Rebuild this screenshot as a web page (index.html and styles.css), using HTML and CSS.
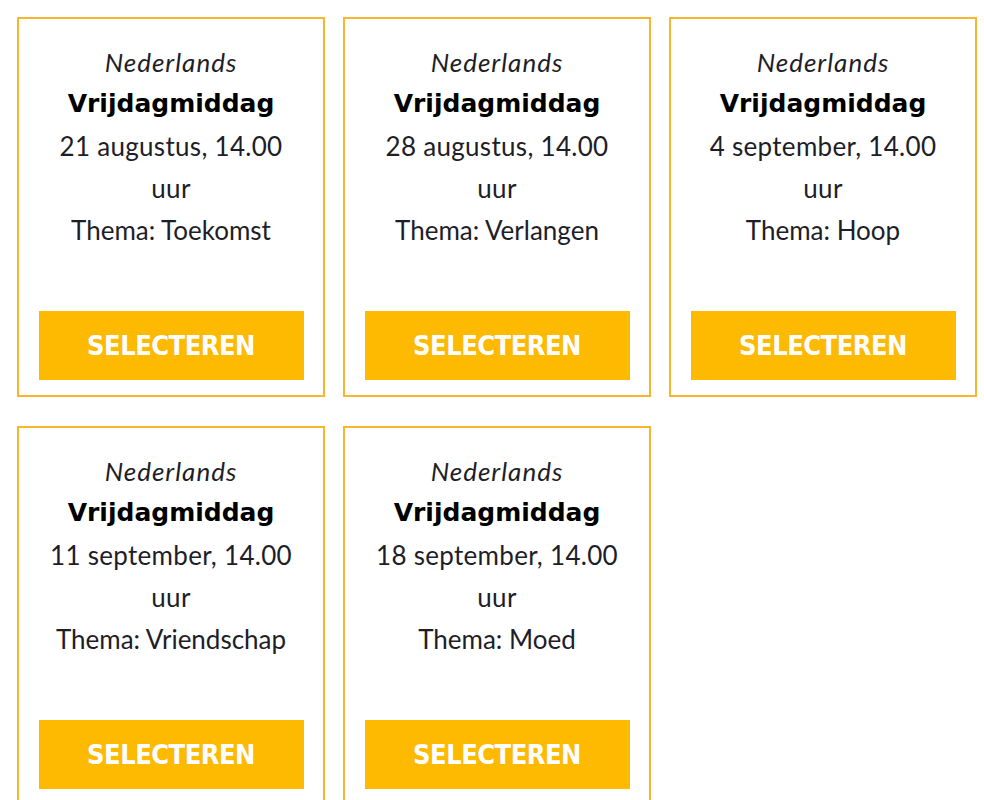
FILE: index.html
```html
<!DOCTYPE html>
<html lang="nl">
<head>
<meta charset="utf-8">
<title>Vrijdagmiddag</title>
<link rel="stylesheet" href="styles.css">
</head>
<body>
<div class="grid">
  <div class="card">
    <div class="info">
      <p class="lang">Nederlands</p>
      <p class="title">Vrijdagmiddag</p>
      <p class="date">21 augustus, 14.00 uur</p>
      <p class="theme">Thema: Toekomst</p>
    </div>
    <button class="btn">SELECTEREN</button>
  </div>
  <div class="card">
    <div class="info">
      <p class="lang">Nederlands</p>
      <p class="title">Vrijdagmiddag</p>
      <p class="date">28 augustus, 14.00 uur</p>
      <p class="theme">Thema: Verlangen</p>
    </div>
    <button class="btn">SELECTEREN</button>
  </div>
  <div class="card">
    <div class="info">
      <p class="lang">Nederlands</p>
      <p class="title">Vrijdagmiddag</p>
      <p class="date">4 september, 14.00 uur</p>
      <p class="theme">Thema: Hoop</p>
    </div>
    <button class="btn">SELECTEREN</button>
  </div>
  <div class="card">
    <div class="info">
      <p class="lang">Nederlands</p>
      <p class="title">Vrijdagmiddag</p>
      <p class="date">11 september, 14.00 uur</p>
      <p class="theme">Thema: Vriendschap</p>
    </div>
    <button class="btn">SELECTEREN</button>
  </div>
  <div class="card">
    <div class="info">
      <p class="lang">Nederlands</p>
      <p class="title">Vrijdagmiddag</p>
      <p class="date">18 september, 14.00 uur</p>
      <p class="theme">Thema: Moed</p>
    </div>
    <button class="btn">SELECTEREN</button>
  </div>
</div>
</body>
</html>
```
FILE: styles.css
```css
html, body {
  margin: 0;
  background: #ffffff;
}

.grid {
  display: grid;
  grid-template-columns: repeat(3, 308px);
  column-gap: 18px;
  row-gap: 29px;
  padding: 17px 0 0 17px;
}

.card {
  box-sizing: border-box;
  height: 380px;
  border: 2px solid #f9b62c;
  padding: 22px 20px 15px 20px;
  display: flex;
  flex-direction: column;
  align-items: center;
}

.info {
  text-align: center;
  font-family: Lato, "Noto Sans", sans-serif;
  font-size: 26px;
  line-height: 42px;
  color: #1e1e28;
  padding: 0 4px;
}

.info p {
  margin: 0;
}

.lang {
  font-style: italic;
  letter-spacing: 1px;
}

.title {
  font-family: "DejaVu Sans", Lato, sans-serif;
  font-weight: 700;
  font-size: 25px;
  color: #000;
}

.date {
  letter-spacing: 0.3px;
}

.btn {
  margin-top: auto;
  width: 265px;
  height: 69px;
  border: none;
  background: #fdba00;
  color: #ffffff;
  font-family: "DejaVu Sans", sans-serif;
  font-stretch: condensed;
  font-weight: 700;
  font-size: 27px;
  letter-spacing: -0.5px;
  padding: 0;
  cursor: pointer;
}
```
